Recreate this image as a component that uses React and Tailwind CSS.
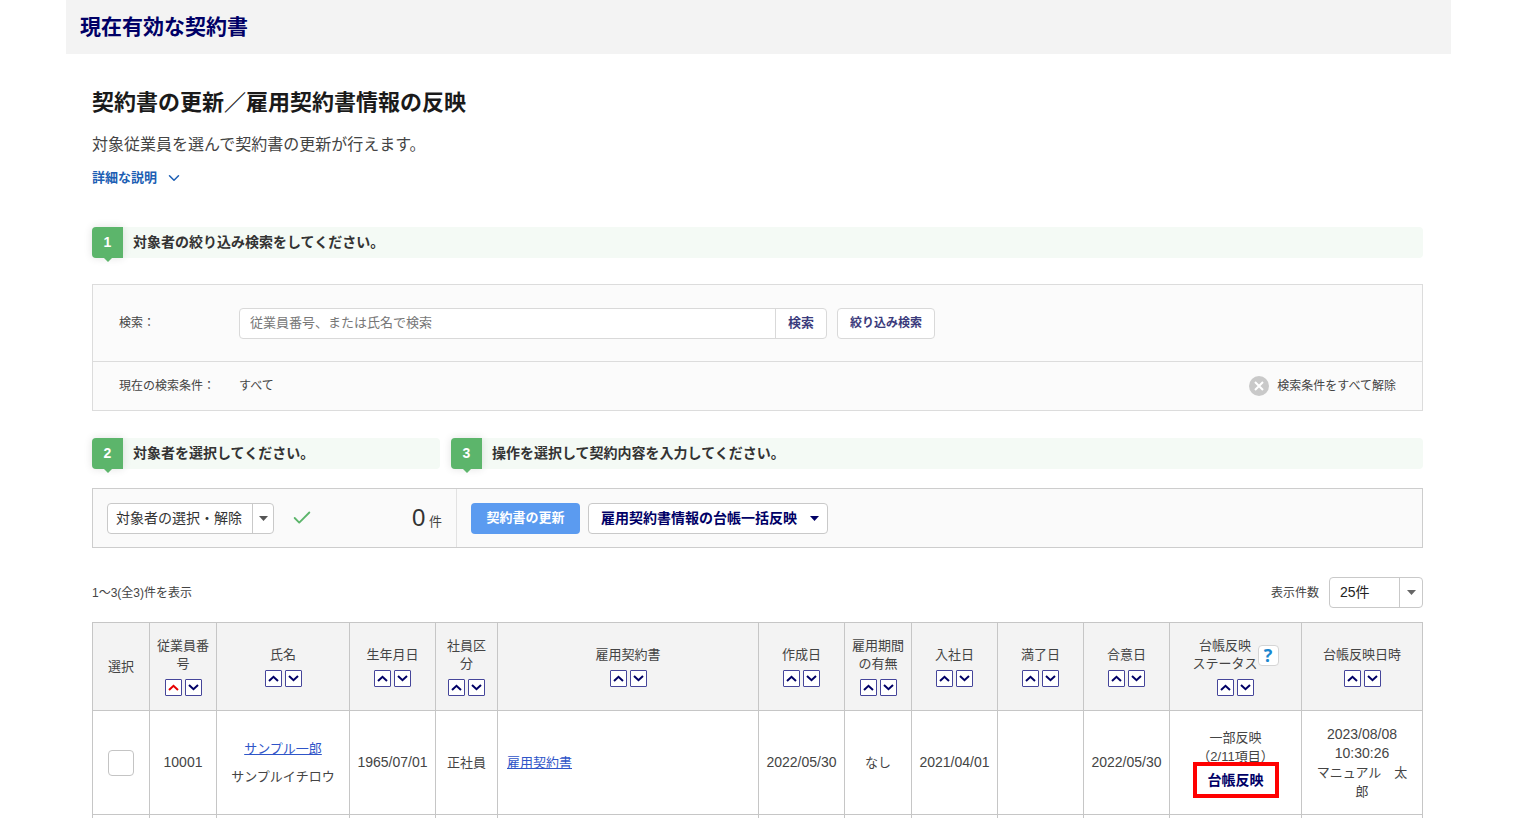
import React, {useState} from "react";
import {Check, ChevronDown} from "lucide-react";

const COLUMNS = [
    {key: "select", lines: ["選択"], width: "w-[57px]", sortable: false},
    {key: "number", lines: ["従業員番号"], width: "w-[67px]", sortable: true},
    {key: "name", lines: ["氏名"], width: "w-[133px]", sortable: true},
    {key: "birth", lines: ["生年月日"], width: "w-[86px]", sortable: true},
    {key: "type", lines: ["社員区分"], width: "w-[62px]", sortable: true},
    {key: "contract", lines: ["雇用契約書"], width: "", sortable: true},
    {key: "created", lines: ["作成日"], width: "w-[86px]", sortable: true},
    {key: "term", lines: ["雇用期間", "の有無"], width: "w-[67px]", sortable: true},
    {key: "joined", lines: ["入社日"], width: "w-[86px]", sortable: true},
    {key: "expired", lines: ["満了日"], width: "w-[86px]", sortable: true},
    {key: "agreed", lines: ["合意日"], width: "w-[86px]", sortable: true},
    {key: "status", lines: ["台帳反映", "ステータス"], width: "w-[132px]", sortable: true, help: true},
    {key: "reflected", lines: ["台帳反映日時"], width: "w-[121px]", sortable: true},
];

const employees = [
    {
        number: "10001",
        name: "サンプル一郎",
        kana: "サンプルイチロウ",
        birth: "1965/07/01",
        type: "正社員",
        contract: "雇用契約書",
        created: "2022/05/30",
        term: "なし",
        joined: "2021/04/01",
        expired: "",
        agreed: "2022/05/30",
        status: "一部反映",
        progress: "（2/11項目）",
        reflectedDate: "2023/08/08",
        reflectedTime: "10:30:26",
        reflectedBy: "マニュアル　太郎",
    },
];

function StepLabel({number, children}) {
    return (
        <div className="flex h-[31px] items-center rounded bg-[#f4faf5]">
            <span
                className="relative flex size-[31px] shrink-0 items-center justify-center rounded-l bg-[#5cb56b] text-[14px] font-bold text-white shadow-[0_0_8px_rgba(0,0,0,0.12)]">
                {number}
                <span className="absolute -bottom-1 left-1/2 -translate-x-1/2 border-x-4 border-t-4 border-x-transparent border-t-[#5cb56b]"/>
            </span>
            <h3 className="pl-2.5 text-[14px] font-bold text-[#333]">{children}</h3>
        </div>
    );
}

function Caret() {
    return (
        <svg width="9" height="5" viewBox="0 0 9 5" fill="currentColor" aria-hidden="true">
            <path d="M0 0h9L4.5 5z"/>
        </svg>
    );
}

function SortButton({up, active, onClick}) {
    return (
        <button
            type="button"
            onClick={onClick}
            aria-label={up ? "昇順" : "降順"}
            className={`flex size-[17px] items-center justify-center rounded-[1px] border border-[#45459a] bg-white ${active ? "text-[#e60000]" : "text-[#000066]"}`}
        >
            <svg width="11" height="7" viewBox="0 0 11 7" fill="none" stroke="currentColor" strokeWidth="2" aria-hidden="true">
                <path d={up ? "M1 6L5.5 1.8L10 6" : "M1 1L5.5 5.2L10 1"}/>
            </svg>
        </button>
    );
}

function HeaderCell({column, sort, onSort}) {
    return (
        <th scope="col" className="border border-[#c6c6c6] px-1.5 font-normal">
            <div className="flex items-center justify-center">
                <span className="leading-[18px]">
                    {column.lines.map((line) => (
                        <span key={line} className="block">{line}</span>
                    ))}
                </span>
                {column.help && (
                    <button
                        type="button"
                        aria-label="ヘルプ"
                        className="flex size-[21px] items-center justify-center rounded border border-[#d5d5d5] bg-white font-['Open_Sans'] text-[18px] leading-none font-bold text-[#1b87cf]"
                    >
                        ?
                    </button>
                )}
            </div>
            {column.sortable && (
                <div className="mt-1.5 flex justify-center gap-[3px]">
                    <SortButton up active={sort === column.key + "-asc"} onClick={() => onSort(column.key + "-asc")}/>
                    <SortButton active={sort === column.key + "-desc"} onClick={() => onSort(column.key + "-desc")}/>
                </div>
            )}
        </th>
    );
}

function Cell({className = "", children}) {
    return <td className={`border border-[#c6c6c6] px-[9px] ${className}`}>{children}</td>;
}

function DateCell({children}) {
    return <td className="border border-[#c6c6c6] text-[14px] whitespace-nowrap">{children}</td>;
}

function EmployeeRow({employee}) {
    return (
        <tr className="h-[104px]">
            <Cell>
                <input
                    type="checkbox"
                    aria-label={employee.name}
                    className="block mx-auto size-[26px] appearance-none rounded border border-[#c4c4c4] bg-white checked:bg-[#5b9bf0]"
                />
            </Cell>
            <DateCell>{employee.number}</DateCell>
            <Cell className="leading-7">
                <a href="#" className="block text-[#2f55c8] underline">{employee.name}</a>
                <span className="block">{employee.kana}</span>
            </Cell>
            <DateCell>{employee.birth}</DateCell>
            <Cell>{employee.type}</Cell>
            <Cell className="text-left">
                <a href="#" className="text-[#2f55c8] underline">{employee.contract}</a>
            </Cell>
            <DateCell>{employee.created}</DateCell>
            <Cell>{employee.term}</Cell>
            <DateCell>{employee.joined}</DateCell>
            <DateCell>{employee.expired}</DateCell>
            <DateCell>{employee.agreed}</DateCell>
            <Cell className="leading-[19px]">
                <span className="block">{employee.status}</span>
                <span className="block">{employee.progress}</span>
                <button
                    type="button"
                    className="relative -mt-1 h-9 w-[86px] border-4 border-[#ff0000] bg-white text-[14px] leading-7 font-bold text-[#000066]"
                >
                    台帳反映
                </button>
            </Cell>
            <Cell className="leading-[19px]">
                <span className="block text-[14px]">{employee.reflectedDate}</span>
                <span className="block text-[14px]">{employee.reflectedTime}</span>
                <span className="block break-all">{employee.reflectedBy}</span>
            </Cell>
        </tr>
    );
}

export default function App() {
    const [keyword, setKeyword] = useState("");
    const [sort, setSort] = useState("number-asc");

    return (
        <div className="bg-white px-[66px] font-['Liberation_Sans','Noto_Sans_CJK_JP',sans-serif] text-[#444]">
            <header className="flex h-[54px] items-center bg-[#f3f3f3] px-3.5">
                <h1 className="text-[21px] font-bold text-[#000066]">現在有効な契約書</h1>
            </header>

            <main className="pr-7 pl-[26px]">
                <h2 className="mt-[33px] text-[22px] leading-8 font-bold text-[#1a1a1a]">契約書の更新／雇用契約書情報の反映</h2>
                <p className="mt-3.5 text-[16px] leading-6">対象従業員を選んで契約書の更新が行えます。</p>
                <button type="button" className="mt-[11px] flex items-center gap-2 text-[13px] leading-5 font-bold text-[#1d5fb4]">
                    詳細な説明
                    <ChevronDown size={18} strokeWidth={2}/>
                </button>

                <div className="mt-[39px]">
                    <StepLabel number="1">対象者の絞り込み検索をしてください。</StepLabel>
                </div>

                {/* 検索 */}
                <section className="mt-[26px] border border-[#dcdcdc] bg-[#fbfbfb] px-[26px] text-[12px]">
                    <form className="flex h-[76px] items-center" onSubmit={(e) => e.preventDefault()}>
                        <label htmlFor="keyword" className="w-[120px] shrink-0">検索：</label>
                        <div className="flex h-[31px] w-[588px] rounded border border-[#d9d9d9] bg-white">
                            <input
                                id="keyword"
                                className="min-w-0 flex-1 rounded-l px-2.5 text-[13px] text-[#333] outline-none placeholder:text-[#777]"
                                placeholder="従業員番号、または氏名で検索"
                                value={keyword}
                                onChange={(e) => setKeyword(e.target.value)}
                            />
                            <button type="submit" className="w-[51px] border-l border-[#d9d9d9] text-[13px] font-bold text-[#3b3b7c]">検索</button>
                        </div>
                        <button type="button" className="ml-2.5 h-[31px] rounded border border-[#d9d9d9] bg-white px-3 text-[12px] font-bold text-[#3b3b7c]">
                            絞り込み検索
                        </button>
                    </form>
                    <div className="-mx-[26px] flex h-[49px] items-center border-t border-[#dcdcdc] px-[26px]">
                        <span className="w-[120px] shrink-0">現在の検索条件：</span>
                        <span>すべて</span>
                        <button type="button" className="ml-auto flex items-center gap-2">
                            <svg width="20" height="20" viewBox="0 0 20 20" aria-hidden="true">
                                <circle cx="10" cy="10" r="10" fill="#c9c9c9"/>
                                <path d="M6 6l8 8M14 6l-8 8" stroke="#fff" strokeWidth="2"/>
                            </svg>
                            検索条件をすべて解除
                        </button>
                    </div>
                </section>

                <div className="mt-[27px] flex gap-[11px]">
                    <div className="w-[348px] shrink-0">
                        <StepLabel number="2">対象者を選択してください。</StepLabel>
                    </div>
                    <div className="flex-1">
                        <StepLabel number="3">操作を選択して契約内容を入力してください。</StepLabel>
                    </div>
                </div>

                {/* 対象者の選択と操作 */}
                <section className="mt-[19px] flex h-[60px] border border-[#cdcdcd] bg-[#fafafa]">
                    <div className="flex w-[364px] shrink-0 items-center border-r border-[#e2e2e2] px-3.5">
                        <div className="grid h-[31px] w-[167px] items-center rounded border border-[#c9c9c9] bg-white">
                            <select
                                aria-label="対象者の選択・解除"
                                className="col-start-1 row-start-1 h-full appearance-none rounded pl-2 text-[14px] text-[#333]"
                            >
                                <option>対象者の選択・解除</option>
                            </select>
                            <span className="pointer-events-none col-start-1 row-start-1 flex h-full w-[21px] items-center justify-center justify-self-end border-l border-[#c9c9c9] text-[#555]">
                                <Caret/>
                            </span>
                        </div>
                        <Check className="ml-[17px] text-[#5cb56b]" size={22} strokeWidth={2}/>
                        <p className="ml-auto text-[13px] text-[#444]"><span className="text-[24px] text-[#333]">0</span> 件</p>
                    </div>
                    <div className="flex items-center gap-2 px-3.5">
                        <button type="button" className="h-[31px] w-[109px] rounded bg-[#5b9bf0] text-[13px] font-bold text-white">契約書の更新</button>
                        <button
                            type="button"
                            className="flex h-[31px] w-60 items-center justify-between rounded border border-[#c9c9c9] bg-white pr-2 pl-3 text-[14px] font-bold text-[#000066]"
                        >
                            雇用契約書情報の台帳一括反映
                            <Caret/>
                        </button>
                    </div>
                </section>

                <div className="mt-[29px] flex h-[31px] items-center text-[12px]">
                    <span>1〜3(全3)件を表示</span>
                    <label htmlFor="per-page" className="mr-2.5 ml-auto">表示件数</label>
                    <div className="grid h-[31px] w-[94px] items-center rounded border border-[#c9c9c9] bg-white">
                        <select id="per-page" className="col-start-1 row-start-1 h-full appearance-none rounded pl-2.5 text-[14px] text-[#222]">
                            <option>25件</option>
                        </select>
                        <span className="pointer-events-none col-start-1 row-start-1 flex h-full w-[23px] items-center justify-center justify-self-end border-l border-[#c9c9c9] text-[#666]">
                            <Caret/>
                        </span>
                    </div>
                </div>

                {/* 契約書一覧 */}
                <table className="mt-3.5 w-full table-fixed border-collapse text-center text-[13px]">
                    <colgroup>
                        {COLUMNS.map((column) => (
                            <col key={column.key} className={column.width}/>
                        ))}
                    </colgroup>
                    <thead className="bg-[#f3f3f3]">
                    <tr className="h-[88px]">
                        {COLUMNS.map((column) => (
                            <HeaderCell key={column.key} column={column} sort={sort} onSort={setSort}/>
                        ))}
                    </tr>
                    </thead>
                    <tbody>
                    {employees.map((employee) => (
                        <EmployeeRow key={employee.number} employee={employee}/>
                    ))}
                    <tr className="h-1">
                        {COLUMNS.map((column) => (
                            <td key={column.key} className="border-x border-[#c6c6c6]"/>
                        ))}
                    </tr>
                    </tbody>
                </table>
            </main>
        </div>
    );
}
